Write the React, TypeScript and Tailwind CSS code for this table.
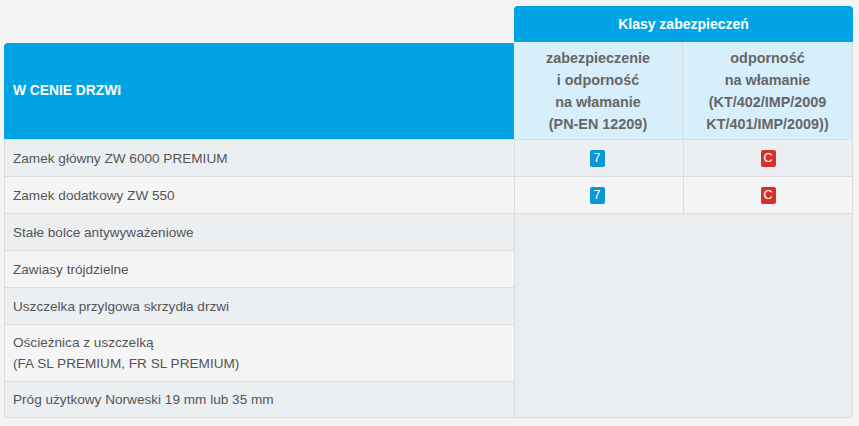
import React from "react";

const rows: { label: React.ReactNode; tall?: boolean }[] = [
  { label: "Zamek główny ZW 6000 PREMIUM" },
  { label: "Zamek dodatkowy ZW 550" },
  { label: "Stałe bolce antywyważeniowe" },
  { label: "Zawiasy trójdzielne" },
  { label: "Uszczelka przylgowa skrzydła drzwi" },
  {
    label: (
      <>
        Ościeżnica z uszczelką
        <br />
        (FA SL PREMIUM, FR SL PREMIUM)
      </>
    ),
    tall: true,
  },
  { label: "Próg użytkowy Norweski 19 mm lub 35 mm" },
];

function Badge({ kind }: { kind: "blue" | "red" }) {
  return (
    <span
      className={
        kind === "blue"
          ? "inline-flex h-[17px] w-[15px] items-center justify-center rounded-[2px] bg-[#0a97da] text-[12.5px] leading-none text-white"
          : "inline-flex h-[17px] w-[15px] items-center justify-center rounded-[2px] bg-[#d7322a] text-[12.5px] leading-none text-white"
      }
    >
      {kind === "blue" ? "7" : "C"}
    </span>
  );
}

export default function App() {
  return (
    <div
      className="h-[426px] w-[859px] bg-[#f4f4f4] pl-[4px] pt-[6px]"
      style={{ fontFamily: '"Liberation Sans", Arial, sans-serif' }}
    >
      <div className="grid w-[849px] grid-cols-[510px_169px_170px] grid-rows-[36px_97px_37px_37px_37px_37px_37px_57px_37px]">
        <div />
        <div className="col-span-2 flex items-center justify-center rounded-t-[4px] bg-[#00a4e4] text-[14px] font-bold text-white">
          Klasy zabezpieczeń
        </div>

        <div className="mt-[1px] flex items-center rounded-tl-[4px] bg-[#00a4e4] pl-[9px] text-[13.8px] font-bold text-white">
          W CENIE DRZWI
        </div>
        <div className="flex items-center justify-center border-r border-[#dcdfe2] bg-[#d6effb] text-center text-[14.4px] font-bold leading-[22px] text-[#666666]">
          <div>
            zabezpieczenie
            <br />i odporność
            <br />
            na włamanie
            <br />
            (PN-EN 12209)
          </div>
        </div>
        <div className="flex items-center justify-center border-r border-[#dddddd] bg-[#d6effb] text-center text-[14.4px] font-bold leading-[22px] text-[#666666]">
          <div>
            odporność
            <br />
            na włamanie
            <br />
            (KT/402/IMP/2009
            <br />
            KT/401/IMP/2009))
          </div>
        </div>

        {rows.map((r, i) => {
          const odd = i % 2 === 0;
          const last = i === rows.length - 1;
          return (
            <React.Fragment key={i}>
              <div
                className={
                  (odd ? "bg-[#eceff2] " : "bg-[#f5f5f5] ") +
                  (last ? "rounded-bl-[4px] border-b " : "") +
                  "flex items-center border-l border-t border-[#dddddd] pl-[8px] text-[13.6px] leading-[21px] text-[#555555]"
                }
              >
                <div>{r.label}</div>
              </div>
              {i < 2 && (
                <>
                  <div
                    className={
                      (odd ? "bg-[#eceff2] " : "bg-[#f5f5f5] ") +
                      "flex items-center justify-center border-l border-t border-[#dddddd] pr-[4px]"
                    }
                  >
                    <Badge kind="blue" />
                  </div>
                  <div
                    className={
                      (odd ? "bg-[#eceff2] " : "bg-[#f5f5f5] ") +
                      "flex items-center justify-center border-l border-r border-t border-[#dddddd]"
                    }
                  >
                    <Badge kind="red" />
                  </div>
                </>
              )}
              {i === 2 && (
                <div className="col-span-2 row-span-5 rounded-br-[3px] border-b border-l border-r border-t border-[#dddddd] bg-[#eaedf0]" />
              )}
            </React.Fragment>
          );
        })}
      </div>
    </div>
  );
}
